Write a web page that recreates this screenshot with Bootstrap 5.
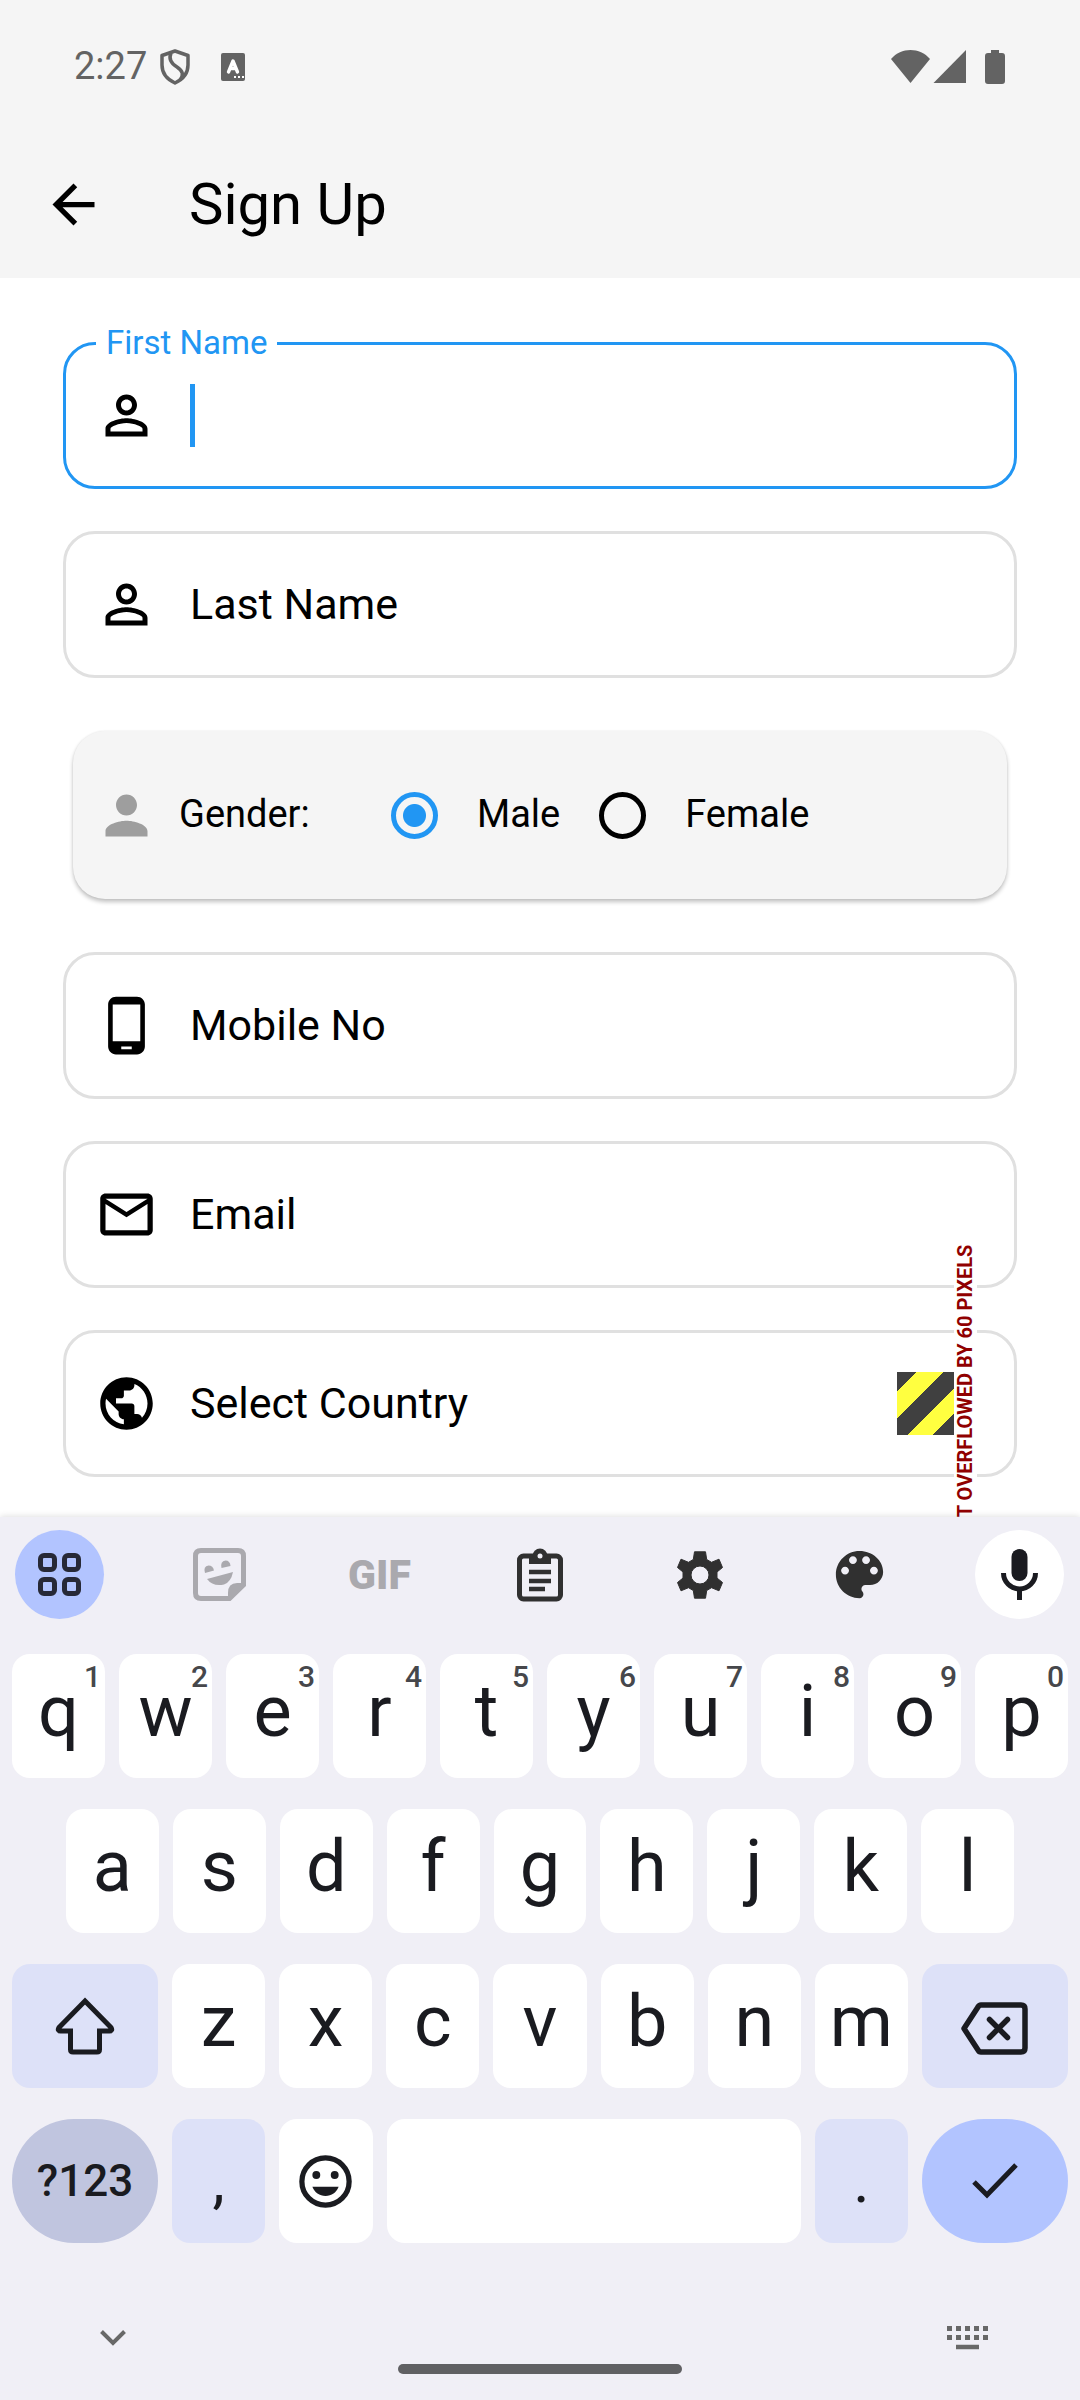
<!DOCTYPE html>
<html lang="en">
<head>
<meta charset="utf-8">
<meta name="viewport" content="width=device-width, initial-scale=1">
<title>Sign Up</title>
<link href="https://cdn.jsdelivr.net/npm/bootstrap@5.3.0/dist/css/bootstrap.min.css" rel="stylesheet">
<style>
  body { font-family: Roboto, "Liberation Sans", sans-serif; color: #000; background: #fff; line-height: 1.2; }
  svg { display: block; flex: none; }
  .app-head { background: #f5f5f5; }
  .status-bar { height: 131px; padding: 2px 75px 0 74px; color: #636363; font-size: 38px; }
  .status-icons { gap: 31px; margin-left: 13px; }
  .title-bar { height: 147px; padding: 0 42px; gap: 84px; }
  .title-bar h1 { font-size: 58px; font-weight: 400; }
  .icon-btn { background: none; border: 0; padding: 0; color: inherit; }

  .signup-form { padding: 64px 63px 40px; gap: 42px; overflow: hidden; }
  .field-box { height: 147px; border: 3px solid #e0e0e0; border-radius: 32px; padding: 0 29px; gap: 32px; font-size: 43px; }
  .field-box.active { border-color: #2196f3; }
  .field-box .form-control, .field-box .form-select { font-size: 43px; min-width: 0; box-shadow: none; background: none; }
  .float-label { top: -20px; left: 30px; padding: 0 10px; line-height: 36px; font-size: 33px; color: #2196f3; background: #fff; }
  .caret-bar { width: 5px; height: 63px; background: #2196f3; }

  .gender-card { height: 168px; margin: 11px 10px; padding: 0 22px; border-radius: 32px; background: #f5f5f5; box-shadow: 0 3px 4px rgba(0,0,0,.24), 0 0 2px rgba(0,0,0,.08); font-size: 38px; }
  .gender-title { width: 212px; margin-left: 21px; }
  .choice { gap: 39px; margin-right: 39px; }
  .choice .form-check-input { width: 47px; height: 47px; margin: 0; border: 5px solid #000; background-color: transparent; box-shadow: none; }
  .choice .form-check-input:checked { border-color: #2196f3; background-image: radial-gradient(circle, #2196f3 11px, transparent 12px); background-size: 100% 100%; }

  .overflow-stripes { width: 57px; height: 63px; right: 60px; top: 39px; background: linear-gradient(135deg, #404040 14px, #ffff40 14px 33px, #404040 33px 52px, #ffff40 52px 70px, #404040 70px); }
  .overflow-note { right: 37px; top: 50%; writing-mode: vertical-rl; transform: translateY(-50%) rotate(180deg); background: #fff; color: #900000; font-size: 20px; font-weight: 700; line-height: 23px; white-space: nowrap; }

  .keyboard { background: #f0eff6; color: #1a1b20; box-shadow: 0 -1px 6px rgba(0,0,0,.12); position: relative; z-index: 2; }
  .tool-row { padding: 13px 16px 35px 15px; }
  .tool { width: 89px; height: 89px; padding: 0; border: 0; border-radius: 50%; background: none; color: #303030; }
  .tool-on { background: #b2c4ff; color: #272937; }
  .tool-mic { background: #fff; color: #1a1b20; }
  .tool-off { color: #aaa9ae; }
  .gif-text { font-size: 41px; font-weight: 900; padding-top: 2px; }
  .key-rows { gap: 31px; }
  .key-row { gap: 14px; padding: 0 12px; }
  .key-row.inset { padding: 0 66px; }
  .key { flex: 1 1 0; min-width: 0; height: 124px; padding: 0 0 8px; border: 0; border-radius: 18px; background: #fff; color: inherit; font-size: 72px; line-height: 84px; }
  .key sup { position: absolute; top: 8px; right: 4px; font-size: 30px; line-height: 30px; font-weight: 500; color: #46474b; }
  .key.wide { flex: 0 0 146px; }
  .key.soft { background: #dde1f8; }
  .key.plain { padding: 0; }
  .key.round { border-radius: 62px; }
  .key.symbols { background: #c0c5df; font-size: 44px; font-weight: 500; }
  .key.enter { background: #b2c4ff; }
  .key.space { flex: 0 0 414px; }
  .key.punct { font-size: 62px; }
  .nav-row { padding: 83px 92px 0 100px; color: #686868; }
  .nav-handle { width: 284px; height: 10px; margin: 14px auto 26px; border-radius: 5px; background: #606063; }
</style>
<script src="https://cdn.jsdelivr.net/npm/bootstrap@5.3.0/dist/js/bootstrap.bundle.min.js"></script>
</head>
<body class="d-flex flex-column min-vh-100">

<header class="app-head">
  <div class="status-bar d-flex align-items-center">
    <span>2:27</span>
    <div class="status-icons d-flex align-items-center">
      <svg width="30" height="36" viewBox="0 0 30 36" fill="none" stroke="currentColor" stroke-width="3.5" stroke-linejoin="round"><path d="M15 2L28 6.500V16Q28 28 15 34Q2 28 2 16V6.500Z"/><path d="M11 4C8 11 12 15 17 18C23 22 24 26 20 31"/></svg>
      <svg width="25" height="28" viewBox="0 0 25 28"><rect width="24" height="28" rx="2" fill="currentColor"/><path d="M7.500 19L12 8L16.500 19M9 15.500H15" fill="none" stroke="#fff" stroke-width="3.400" stroke-linecap="round" stroke-linejoin="round"/><path d="M13 23h2v2h-2zM17 23h2v2h-2zM21 23h2v2h-2z" fill="#fff"/></svg>
    </div>
    <svg class="ms-auto" width="114" height="34" viewBox="0 0 114 34" fill="currentColor"><path d="M0 9C10-3 29-3 39 9L19.500 33Z"/><path d="M75 0V33H42.500Z"/><path d="M100 0h8v3h3q3 0 3 3v25q0 3-3 3h-14q-3 0-3-3V6q0-3 3-3h3z"/></svg>
  </div>
  <div class="title-bar d-flex align-items-center">
    <button class="icon-btn" type="button" aria-label="Back"><svg width="63" height="63" viewBox="0 0 24 24"><path d="M20 11H7.830l5.590-5.590L12 4l-8 8 8 8 1.410-1.410L7.830 13H20v-2z"/></svg></button>
    <h1 class="mb-0">Sign Up</h1>
  </div>
</header>

<form class="signup-form d-flex flex-column">
  <div class="field-box active d-flex align-items-center position-relative">
    <label class="float-label position-absolute" for="firstName">First Name</label>
    <svg width="63" height="63" viewBox="0 0 24 24"><path d="M12 5.900c1.160 0 2.100.94 2.100 2.100s-.94 2.100-2.100 2.100S9.900 9.160 9.900 8s.94-2.100 2.100-2.100m0 9c2.970 0 6.100 1.460 6.100 2.100v1.100H5.900V17c0-.64 3.130-2.100 6.100-2.100M12 4C9.790 4 8 5.790 8 8s1.790 4 4 4 4-1.790 4-4-1.790-4-4-4zm0 9c-2.670 0-8 1.340-8 4v3h16v-3c0-2.660-5.330-4-8-4z"/></svg>
    <div class="d-flex align-items-center flex-grow-1">
      <span class="caret-bar"></span>
      <input class="form-control border-0 p-0" id="firstName" type="text">
    </div>
  </div>

  <div class="field-box d-flex align-items-center">
    <svg width="63" height="63" viewBox="0 0 24 24"><path d="M12 5.900c1.160 0 2.100.94 2.100 2.100s-.94 2.100-2.100 2.100S9.900 9.160 9.900 8s.94-2.100 2.100-2.100m0 9c2.970 0 6.100 1.460 6.100 2.100v1.100H5.900V17c0-.64 3.130-2.100 6.100-2.100M12 4C9.790 4 8 5.790 8 8s1.790 4 4 4 4-1.790 4-4-1.790-4-4-4zm0 9c-2.670 0-8 1.340-8 4v3h16v-3c0-2.660-5.330-4-8-4z"/></svg>
    <label class="text-nowrap" for="lastName">Last Name</label>
    <input class="form-control border-0 p-0" id="lastName" type="text">
  </div>

  <div class="gender-card d-flex align-items-center" role="radiogroup" aria-labelledby="genderTitle">
    <svg width="63" height="63" viewBox="0 0 24 24" fill="#9e9e9e"><path d="M12 12c2.210 0 4-1.790 4-4s-1.790-4-4-4-4 1.790-4 4 1.790 4 4 4zm0 2c-2.670 0-8 1.340-8 4v2h16v-2c0-2.660-5.330-4-8-4z"/></svg>
    <span class="gender-title" id="genderTitle">Gender:</span>
    <div class="choice d-flex align-items-center">
      <input class="form-check-input" type="radio" name="gender" id="male" checked>
      <label for="male">Male</label>
    </div>
    <div class="choice d-flex align-items-center">
      <input class="form-check-input" type="radio" name="gender" id="female">
      <label for="female">Female</label>
    </div>
  </div>

  <div class="field-box d-flex align-items-center">
    <svg width="63" height="63" viewBox="0 0 24 24"><path d="M16 1H8C6.340 1 5 2.340 5 4v16c0 1.660 1.340 3 3 3h8c1.660 0 3-1.340 3-3V4c0-1.660-1.340-3-3-3zm-2 20h-4v-1h4v1zm3.250-3H6.750V4h10.500v14z"/></svg>
    <label class="text-nowrap" for="mobile">Mobile No</label>
    <input class="form-control border-0 p-0" id="mobile" type="tel">
  </div>

  <div class="field-box d-flex align-items-center">
    <svg width="63" height="63" viewBox="0 0 24 24"><path d="M22 6c0-1.100-.9-2-2-2H4c-1.100 0-2 .9-2 2v12c0 1.100.9 2 2 2h16c1.100 0 2-.9 2-2V6zm-2 0l-8 5-8-5h16zm0 12H4V8l8 5 8-5v10z"/></svg>
    <label class="text-nowrap" for="email">Email</label>
    <input class="form-control border-0 p-0" id="email" type="email">
  </div>

  <div class="field-box d-flex align-items-center position-relative">
    <svg width="63" height="63" viewBox="0 0 24 24"><path d="M12 2C6.480 2 2 6.480 2 12s4.480 10 10 10 10-4.480 10-10S17.520 2 12 2zm-1 17.930c-3.950-.49-7-3.850-7-7.930 0-.62.08-1.210.21-1.790L9 15v1c0 1.100.9 2 2 2v1.930zm6.900-2.540c-.26-.81-1-1.390-1.900-1.390h-1v-3c0-.55-.45-1-1-1H8v-2h2c.55 0 1-.45 1-1V7h2c1.100 0 2-.9 2-2v-.41c2.930 1.190 5 4.060 5 7.410 0 2.080-.8 3.970-2.100 5.390z"/></svg>
    <label class="text-nowrap" for="country">Select Country</label>
    <select class="form-select border-0 p-0" id="country"><option value=""></option></select>
    <span class="overflow-stripes position-absolute"></span>
    <span class="overflow-note position-absolute">RIGHT OVERFLOWED BY 60 PIXELS</span>
  </div>
</form>

<section class="keyboard flex-grow-1" aria-label="Keyboard">
  <div class="tool-row d-flex justify-content-between">
    <button type="button" class="tool tool-on d-flex align-items-center justify-content-center" aria-label="Menu"><svg width="43" height="43" viewBox="0 0 43 43" fill="none" stroke="currentColor" stroke-width="5"><rect x="2.500" y="2.500" width="14" height="14" rx="3.500"/><rect x="26.500" y="2.500" width="14" height="14" rx="3.500"/><rect x="2.500" y="26.500" width="14" height="14" rx="3.500"/><rect x="26.500" y="26.500" width="14" height="14" rx="3.500"/></svg></button>
    <button type="button" class="tool tool-off d-flex align-items-center justify-content-center" aria-label="Stickers"><svg width="53" height="53" viewBox="0 0 53 53" fill="currentColor"><path d="M8 2.500H45Q50.500 2.500 50.500 8V37L36.500 50.500H8Q2.500 50.500 2.500 45V8Q2.500 2.500 8 2.500Z" fill="none" stroke="currentColor" stroke-width="5"/><path d="M35 52V45Q35 35 44 35H52Z"/><path d="M14 31L40 24Q38 34 31 36.500Q20 39 14 31Z"/><path d="M12 25Q10 18 15.500 17.500Q20 17.500 21 22.500Z"/><path d="M28.500 20Q27 13 32.500 12.500Q37 12.500 37.500 18Z"/></svg></button>
    <button type="button" class="tool tool-off gif-text">GIF</button>
    <button type="button" class="tool d-flex align-items-center justify-content-center" aria-label="Clipboard"><svg width="46" height="54" viewBox="0 0 46 54" fill="none" stroke="currentColor" stroke-width="5"><rect x="2.500" y="8" width="41" height="43" rx="4"/><path d="M12 7H34V16H12Z" fill="currentColor" stroke="none"/><circle cx="23" cy="8" r="7.500" fill="currentColor" stroke="none"/><circle cx="23" cy="8" r="2.500" fill="#f0eff6" stroke="none"/><path d="M12 24H34M12 33H34M12 41H28" stroke-width="4.500"/></svg></button>
    <button type="button" class="tool d-flex align-items-center justify-content-center" aria-label="Settings"><svg width="48" height="48" viewBox="-24 -24 48 48"><path fill="currentColor" stroke="currentColor" stroke-linejoin="round" fill-rule="evenodd" d="M-5.500-23.200H5.500L6.700-15.500L11.500-12.700L19-15.800L22.500-7.500L17-3V3L22.500 7.500L19 15.800L11.500 12.700L6.700 15.500L5.500 23.200H-5.500L-6.700 15.500L-11.500 12.700L-19 15.800L-22.500 7.500L-17 3V-3L-22.500-7.500L-19-15.800L-11.500-12.700L-6.700-15.500ZM0-9A9 9 0 1 0 0 9A9 9 0 1 0 0-9Z"/></svg></button>
    <button type="button" class="tool d-flex align-items-center justify-content-center" aria-label="Themes"><svg width="63" height="63" viewBox="0 0 24 24" fill="currentColor"><path d="M12 3c-4.970 0-9 4.030-9 9s4.030 9 9 9c.83 0 1.500-.67 1.500-1.500 0-.39-.15-.74-.39-1.010-.23-.26-.38-.61-.38-.99 0-.83.67-1.500 1.500-1.500H16c2.760 0 5-2.240 5-5 0-4.420-4.030-8-9-8zm-5.500 9c-.83 0-1.500-.67-1.500-1.500S5.670 9 6.500 9 8 9.670 8 10.500 7.330 12 6.500 12zm3-4C8.670 8 8 7.330 8 6.500S8.670 5 9.500 5s1.500.67 1.500 1.500S10.330 8 9.500 8zm5 0c-.83 0-1.500-.67-1.500-1.500S13.670 5 14.500 5s1.500.67 1.500 1.500S15.330 8 14.500 8zm3 4c-.83 0-1.500-.67-1.500-1.500S16.670 9 17.500 9s1.500.67 1.500 1.500-.67 1.500-1.500 1.500z"/></svg></button>
    <button type="button" class="tool tool-mic d-flex align-items-center justify-content-center" aria-label="Voice input"><svg width="37" height="51" viewBox="0 0 37 51"><rect x="10.500" width="16" height="32" rx="8" fill="currentColor"/><path d="M2.500 24A16 16 0 0 0 34.500 24M18.500 40V51" fill="none" stroke="currentColor" stroke-width="5"/></svg></button>
  </div>

  <div class="key-rows d-flex flex-column">
    <div class="key-row d-flex">
      <button type="button" class="key position-relative">q<sup>1</sup></button>
      <button type="button" class="key position-relative">w<sup>2</sup></button>
      <button type="button" class="key position-relative">e<sup>3</sup></button>
      <button type="button" class="key position-relative">r<sup>4</sup></button>
      <button type="button" class="key position-relative">t<sup>5</sup></button>
      <button type="button" class="key position-relative">y<sup>6</sup></button>
      <button type="button" class="key position-relative">u<sup>7</sup></button>
      <button type="button" class="key position-relative">i<sup>8</sup></button>
      <button type="button" class="key position-relative">o<sup>9</sup></button>
      <button type="button" class="key position-relative">p<sup>0</sup></button>
    </div>
    <div class="key-row inset d-flex">
      <button type="button" class="key">a</button>
      <button type="button" class="key">s</button>
      <button type="button" class="key">d</button>
      <button type="button" class="key">f</button>
      <button type="button" class="key">g</button>
      <button type="button" class="key">h</button>
      <button type="button" class="key">j</button>
      <button type="button" class="key">k</button>
      <button type="button" class="key">l</button>
    </div>
    <div class="key-row d-flex">
      <button type="button" class="key wide soft plain d-flex align-items-center justify-content-center" aria-label="Shift"><svg width="60" height="58" viewBox="0 0 60 58" fill="none" stroke="currentColor" stroke-width="5"><path d="M30 4L56 30.500Q58 34 54.500 34H44.500V52.500Q44.500 55 42 55H18Q15.500 55 15.500 52.500V34H5.500Q2 34 4 30.500Z"/></svg></button>
      <button type="button" class="key">z</button>
      <button type="button" class="key">x</button>
      <button type="button" class="key">c</button>
      <button type="button" class="key">v</button>
      <button type="button" class="key">b</button>
      <button type="button" class="key">n</button>
      <button type="button" class="key">m</button>
      <button type="button" class="key wide soft plain d-flex align-items-center justify-content-center" aria-label="Delete"><svg class="mt-1" width="67" height="53" viewBox="0 0 67 53" fill="none" stroke="currentColor" stroke-width="5.500" stroke-linejoin="round" stroke-linecap="round"><path d="M20 3H60Q64 3 64 7V46Q64 50 60 50H20Q18 50 17 48L3 26.500L17 5Q18 3 20 3Z"/><path d="M28.500 17.500L46.500 35.500M46.500 17.500L28.500 35.500"/></svg></button>
    </div>
    <div class="key-row d-flex">
      <button type="button" class="key wide round plain symbols">?123</button>
      <button type="button" class="key soft plain punct">,</button>
      <button type="button" class="key plain d-flex align-items-center justify-content-center" aria-label="Emoji"><svg width="63" height="63" viewBox="0 0 24 24" fill="currentColor"><circle cx="12" cy="12" r="9" fill="none" stroke="currentColor" stroke-width="2"/><circle cx="8.500" cy="9.500" r="1.500"/><circle cx="15.500" cy="9.500" r="1.500"/><path d="M7 14H17C16.200 16.200 14.300 17.500 12 17.500S7.800 16.200 7 14Z"/></svg></button>
      <button type="button" class="key space" aria-label="Space"></button>
      <button type="button" class="key soft plain punct">.</button>
      <button type="button" class="key wide round plain enter d-flex align-items-center justify-content-center" aria-label="Done"><svg width="46" height="36" viewBox="0 0 46 36" fill="none" stroke="currentColor" stroke-width="5"><path d="M2 19L15 32L44 2"/></svg></button>
    </div>
  </div>

  <div class="nav-row d-flex align-items-center justify-content-between">
    <button class="icon-btn" type="button" aria-label="Hide keyboard"><svg width="26" height="24" viewBox="0 0 26 24" fill="none" stroke="currentColor" stroke-width="4"><path d="M1.500 5.500L13 17L24.500 5.500"/></svg></button>
    <button class="icon-btn" type="button" aria-label="Switch keyboard"><svg width="41" height="24" viewBox="0 0 41 24" fill="none" stroke="currentColor" stroke-width="5"><path d="M0 2.500H41M0 11.500H41" stroke-dasharray="5 4"/><path d="M9 21H32" stroke-width="4.500"/></svg></button>
  </div>
  <div class="nav-handle"></div>
</section>
</body>
</html>
